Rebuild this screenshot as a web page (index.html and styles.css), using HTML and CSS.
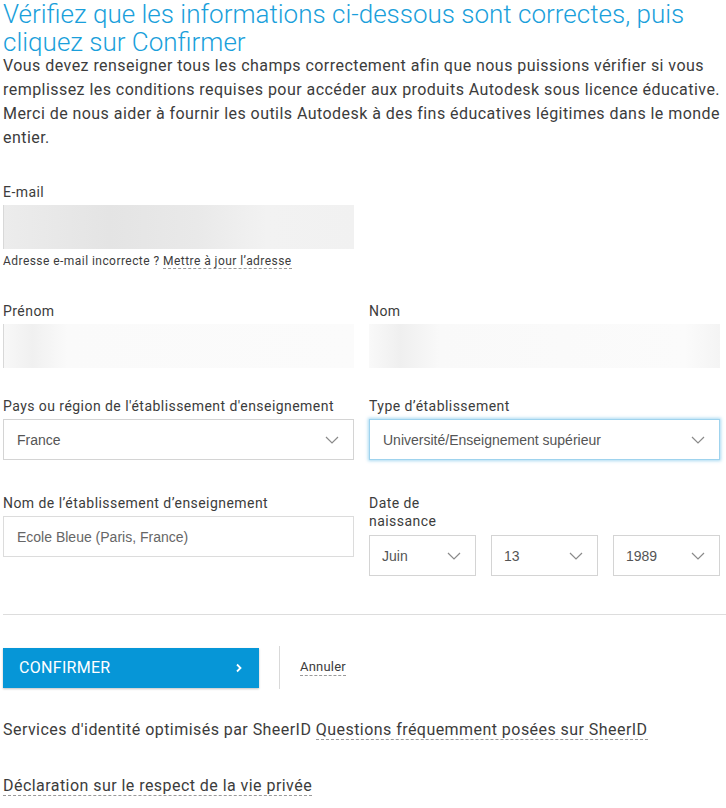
FILE: index.html
```html
<!DOCTYPE html>
<html lang="fr">
<head>
  <meta charset="UTF-8">
  <meta name="viewport" content="width=device-width, initial-scale=1.0">
  <title>Vérification SheerID</title>
  <link rel="stylesheet" href="styles.css">
</head>
<body>

  <div class="page">
    <h1 class="title">Vérifiez que les informations ci-dessous sont correctes, puis cliquez sur Confirmer</h1>
    <p class="intro">Vous devez renseigner tous les champs correctement afin que nous puissions vérifier si vous remplissez les conditions requises pour accéder aux produits Autodesk sous licence éducative. Merci de nous aider à fournir les outils Autodesk à des fins éducatives légitimes dans le monde entier.</p>

    <form class="form">
      <div class="row email-row">
        <div class="field">
          <label class="label">E-mail</label>
          <div class="input blurred email-blur"></div>
          <div class="helper">Adresse e-mail incorrecte ? <a href="#" class="dotted">Mettre à jour l’adresse</a></div>
        </div>
      </div>

      <div class="row name-row">
        <div class="field">
          <label class="label">Prénom</label>
          <div class="input blurred first-blur"></div>
        </div>
        <div class="field">
          <label class="label">Nom</label>
          <div class="input blurred last-blur"></div>
        </div>
      </div>

      <div class="row country-row">
        <div class="field">
          <label class="label">Pays ou région de l'établissement d'enseignement</label>
          <div class="select">
            <span>France</span>
            <svg class="chevron" width="14" height="8" viewBox="0 0 14 8"><path d="M1 1l6 6 6-6" fill="none" stroke="#8a8a8a" stroke-width="1.2"/></svg>
          </div>
        </div>
        <div class="field">
          <label class="label">Type d’établissement</label>
          <div class="select focused">
            <span>Université/Enseignement supérieur</span>
            <svg class="chevron" width="14" height="8" viewBox="0 0 14 8"><path d="M1 1l6 6 6-6" fill="none" stroke="#8a8a8a" stroke-width="1.2"/></svg>
          </div>
        </div>
      </div>

      <div class="row last-row">
        <div class="field">
          <label class="label">Nom de l’établissement d’enseignement</label>
          <div class="input school">Ecole Bleue (Paris, France)</div>
        </div>
        <div class="field">
          <label class="label date-label">Date de<br>naissance</label>
          <div class="date-row">
            <div class="select small">
              <span>Juin</span>
              <svg class="chevron" width="14" height="8" viewBox="0 0 14 8"><path d="M1 1l6 6 6-6" fill="none" stroke="#8a8a8a" stroke-width="1.2"/></svg>
            </div>
            <div class="select small">
              <span>13</span>
              <svg class="chevron" width="14" height="8" viewBox="0 0 14 8"><path d="M1 1l6 6 6-6" fill="none" stroke="#8a8a8a" stroke-width="1.2"/></svg>
            </div>
            <div class="select small">
              <span>1989</span>
              <svg class="chevron" width="14" height="8" viewBox="0 0 14 8"><path d="M1 1l6 6 6-6" fill="none" stroke="#8a8a8a" stroke-width="1.2"/></svg>
            </div>
          </div>
        </div>
      </div>

      <hr class="divider">

      <div class="actions">
        <button type="button" class="confirm-btn">
          <span>CONFIRMER</span>
          <svg width="8" height="10" viewBox="0 0 8 10"><path d="M2 1.5l3.5 3.5L2 8.5" fill="none" stroke="#fff" stroke-width="1.8"/></svg>
        </button>
        <div class="sep"></div>
        <a href="#" class="dotted cancel">Annuler</a>
      </div>
    </form>

    <p class="footer">Services d'identité optimisés par SheerID <a href="#" class="dotted">Questions fréquemment posées sur SheerID</a></p>
    <p class="footer privacy"><a href="#" class="dotted">Déclaration sur le respect de la vie privée</a></p>
  </div>

</body>
</html>
```

FILE: styles.css
```css
body {
  margin: 0;
  padding: 0;
  background: #ffffff;
  font-family: Roboto, 'Liberation Sans', sans-serif;
  letter-spacing: 0.45px;
  color: #3c3c3c;
}

.page {
  padding: 0 0 0 3px;
}

.title {
  margin: 0;
  font-size: 26px;
  line-height: 28px;
  font-weight: 300;
  letter-spacing: 0;
  color: #1a9fdb;
}

.intro {
  margin: -2px 0 0 0;
  font-size: 16px;
  line-height: 24px;
  color: #3c3c3c;
}

.form {
  margin-top: 32px;
}

.row {
  display: grid;
  grid-template-columns: 351px 351px;
  column-gap: 15px;
  margin-bottom: 30px;
}

.email-row {
  margin-bottom: 32px;
}

.name-row {
  margin-bottom: 28px;
}

.country-row {
  margin-bottom: 33px;
}

.last-row {
  margin-bottom: 0;
}

.label {
  display: block;
  font-size: 14px;
  line-height: 20px;
  margin-bottom: 3px;
  color: #3c3c3c;
}

.date-label {
  line-height: 18px;
  margin-top: 1px;
  margin-bottom: 5px;
}

.input {
  box-sizing: border-box;
  height: 44px;
  border: 1px solid #dcdcdc;
  font-family: 'Liberation Sans', Arial, sans-serif;
  letter-spacing: 0;
  font-size: 14px;
  color: #666;
  display: flex;
  align-items: center;
  padding: 0 13px;
}

.blurred {
  border: none;
  border-left: 1px solid #d8d8d8;
}

.email-blur {
  background: linear-gradient(90deg, #ececec 0%, #e4e4e4 30%, #e9e9e9 55%, #f2f2f2 75%, #f1f1f1 100%);
}

.first-blur {
  background: linear-gradient(90deg, #f8f8f8 0%, #f0f0f0 8%, #fafafa 18%, #fbfbfb 100%);
}

.last-blur {
  border-left: none;
  background: linear-gradient(90deg, #f9f9f9 0%, #efefef 9%, #f9f9f9 20%, #fbfbfb 90%, #f4f4f4 100%);
}

.school {
  height: 41px;
}

.helper {
  font-size: 12px;
  line-height: 16px;
  margin-top: 4px;
  color: #3c3c3c;
}

.dotted {
  color: inherit;
  text-decoration: none;
  border-bottom: 1px dashed #9a9a9a;
}

.select {
  box-sizing: border-box;
  height: 41px;
  border: 1px solid #d4d4d4;
  display: flex;
  align-items: center;
  justify-content: space-between;
  padding: 0 14px 0 13px;
  font-family: 'Liberation Sans', Arial, sans-serif;
  letter-spacing: 0;
  font-size: 14px;
  color: #555;
}

.select.focused {
  border-color: #9fd3ee;
  box-shadow: 0 0 3px 1px rgba(66, 170, 225, 0.45);
}

.date-row {
  display: grid;
  grid-template-columns: 107px 107px 107px;
  column-gap: 15px;
}

.select.small {
  padding: 0 14px 0 12px;
}

.divider {
  border: none;
  border-top: 1px solid #dddddd;
  margin: 38px 0 31px 0;
}

.actions {
  display: flex;
  align-items: center;
}

.confirm-btn {
  width: 256px;
  height: 40px;
  border: none;
  background-color: #0696d7;
  color: #fff;
  font-family: Roboto, 'Liberation Sans', sans-serif;
  font-size: 16px;
  letter-spacing: 0.3px;
  display: flex;
  align-items: center;
  justify-content: space-between;
  padding: 0 16px 0 16px;
  box-shadow: 0 1px 2px rgba(0, 0, 0, 0.25);
  cursor: pointer;
}

.sep {
  width: 1px;
  height: 43px;
  background: #d9d9d9;
  margin: 0 20px 0 20px;
}

.cancel {
  font-size: 13px;
  line-height: 16px;
  letter-spacing: 0.2px;
}

.footer {
  margin: 31px 0 0 0;
  font-size: 16px;
  line-height: 20px;
}

.footer.privacy {
  margin-top: 36px;
}
```
